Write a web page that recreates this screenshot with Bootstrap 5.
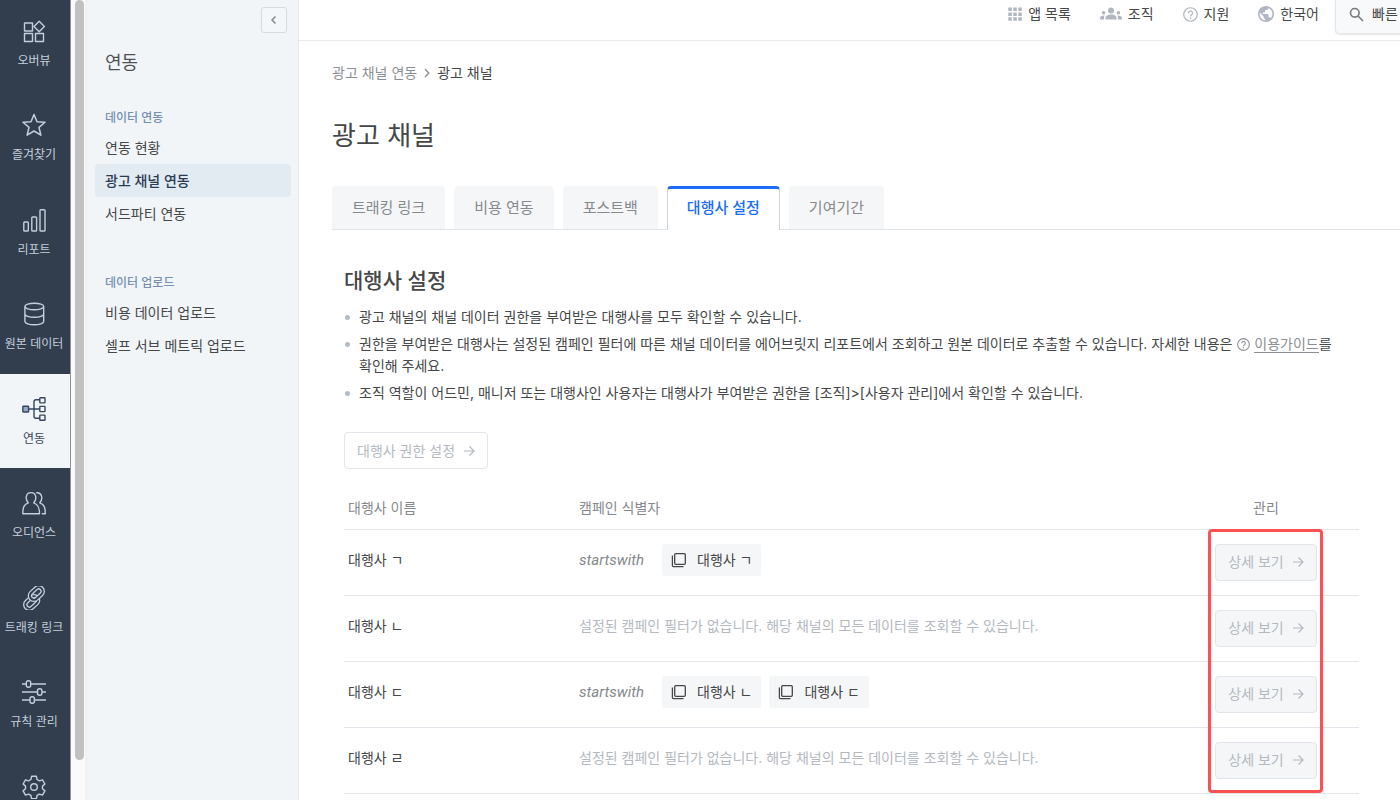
<!DOCTYPE html>
<html lang="ko">
<head>
<meta charset="utf-8">
<meta name="viewport" content="width=device-width, initial-scale=1">
<title>광고 채널</title>
<link href="https://cdn.jsdelivr.net/npm/bootstrap@5.3.0/dist/css/bootstrap.min.css" rel="stylesheet">
<style>
body{font-family:Inter,"Noto Sans CJK KR",sans-serif;font-size:14px;line-height:22px;color:#454748;background:#fff;word-break:keep-all}
a{color:inherit;text-decoration:none}
svg{display:block;fill:none;stroke:currentColor;flex:none}
.shell{height:100vh;overflow:hidden}
.rail{width:71px;background:#323e4e;border-right:1px solid #8b939d;color:#c3cedb;font-size:12px;line-height:18px}
.rail ul{margin-top:-4px}
.rail li{height:94px}
.rail li:nth-child(even){height:95px}
.rail a{height:100%;padding:23px 2px 0 0;gap:9px;white-space:nowrap}
.rail a.active{background:#f1f5f8;color:#36475c}
.track{width:16px;background:#fafafa;border-right:2px solid #f0f1f3;padding:0 2px 40px 4px}
.thumb{background:#c1c1c1;border-radius:5px;height:100%;width:9px}
.side{width:212px;background:#f1f5f8;border-right:1px solid #e4e9ee;padding:7px 7px 0 8px}
.fold{width:26px;height:26px;margin-right:4px;border:1px solid #d5dade;border-radius:3px;background:#f4f7f9;color:#85898d;padding:0}
.side-title{font-size:18px;line-height:26px;margin:17px 0 32px;padding-left:10px;font-weight:400;color:#505254}
.side-group{font-size:12px;line-height:20px;margin-bottom:3px;padding-left:10px;color:#7590b0;font-weight:500}
.side ul{margin-bottom:43px}
.side li a{display:block;line-height:33px;padding-left:10px;border-radius:4px}
.side li a.active{background:#e2eaf2;color:#2b3c52;font-weight:500}
.topbar{height:41px;border-bottom:1px solid #e9ecef}
.topbar nav{height:28px;gap:29px;margin-right:16px}
.topbar svg{color:#b0b7c0}
.topbar nav a{gap:6px}
.quick{width:65px;height:34px;overflow:hidden;white-space:nowrap;background:#f8f9fb;border:1px solid #e4e7ea;border-width:0 0 1px 1px;border-radius:0 0 0 5px;box-shadow:0 1px 2px #0000001a;padding:0 0 5px 13px;gap:8px;color:#454748}
.topbar .quick svg{color:#77797c}
.page{padding-left:33px}
.crumbs{margin-top:21px;gap:6px;color:#8b8e93}
.crumbs [aria-current]{color:#454748}
h1{font-size:26px;line-height:38px;font-weight:400;margin:33px 0 31px;color:#454748}
.tabs{gap:9px;border-bottom:1px solid #dfe4ea}
.tabs a{height:43px;padding:0 20px;font-size:15px;line-height:44px;background:#f5f6f8;color:#86898d;border-radius:4px 4px 0 0}
.tabs a.active{height:44px;margin-bottom:-1px;padding:0 19px;line-height:38px;background:#fff;color:#1a6dff;font-weight:500;border:1px solid #cdd3da;border-top:3px solid #1a6dff;border-bottom:0}
.panel{padding:36px 41px 0 12px}
h2{font-size:21px;line-height:30px;font-weight:500;margin-bottom:10px;color:#454748}
.notes{gap:5px;margin-bottom:28px}
.notes li{padding-left:15px;position:relative}
.notes li::before{content:"";position:absolute;left:1px;top:9px;width:5px;height:5px;border-radius:50%;background:#b4bcc6}
.notes svg{display:inline-block;vertical-align:-2px;color:#8b8e93;margin-left:1px}
.notes a{color:#8b8e93;border-bottom:1px solid #8b8e93}
.go{height:37px;border:1px solid #e2e5e9;border-radius:4px;background:#fff;color:#b4b9c0;padding:0 12px;gap:8px;line-height:22px;white-space:nowrap}
.go.filled{background:#f5f6f8}
.grid{table-layout:fixed;width:100%;margin-top:18px}
.grid th{height:42px;padding:0 4px;font-weight:400;color:#85888c;border-bottom:1px solid #e2e5ea}
.grid td{height:66px;padding:14px 4px;vertical-align:top;border-bottom:1px solid #e2e5ea}
.grid .name{width:231px}
.grid .act{width:186px;text-align:center}
.rowline{line-height:32px;min-height:32px}
.empty{color:#b4b9c0}
.op{color:#85888c;font-family:Roboto,sans-serif;font-size:15px;font-style:italic;margin-right:18px}
.chip{background:#f5f6f8;border-radius:3px;padding:0 9px;gap:10px;margin-right:8px}
.callout-box{position:absolute;top:42px;bottom:1px;right:36px;width:115px;border:3px solid #fa5252;border-radius:4px;pointer-events:none}
</style>
</head>
<body>
<svg class="d-none">
  <symbol id="arrow" viewBox="0 0 12 12"><path d="M1 6h10M6.500 1.500 11 6l-4.500 4.500" stroke-width="1.200"/></symbol>
  <symbol id="help" viewBox="0 0 16 16"><circle cx="8" cy="8" r="7.200" stroke-width="1.300"/><path d="M5.800 6.600a2.200 2.200 0 1 1 3.400 1.800C8.400 9 8 9.200 8 10.200M8 11.300v1.400" stroke-width="1.300"/></symbol>
  <symbol id="copy" viewBox="0 0 16 16"><rect x="3.700" y="1.700" width="10.600" height="10.600" rx="1" stroke-width="1.300"/><path d="M1.400 3.500V13.600q0 1 1 1H12.500" stroke-width="1.300"/></symbol>
</svg>
<div class="shell d-flex">
  <nav class="rail flex-shrink-0 overflow-hidden" aria-label="주 메뉴">
    <ul class="list-unstyled mb-0">
      <li><a href="#" class="d-flex flex-column align-items-center"><svg width="24" height="24" viewBox="0 0 24 24" stroke-width="1.400"><path d="M2.500 4h8v8h-8zM2.500 14.500h8v8h-8zM13.500 14.500h8v8h-8zM17.200 2.300l5.200 5.200-5.200 5.200L12 7.500z" stroke-linejoin="round"/></svg>오버뷰</a></li>
      <li><a href="#" class="d-flex flex-column align-items-center"><svg width="24" height="24" viewBox="0 0 24 24" stroke-width="1.500" stroke-linejoin="round"><path d="M12 1.500l3 7.200 8 .6-6 5.100 1.900 7.800L12 18l-6.900 4.200L7 14.400 1 9.300l8-.6z"/></svg>즐겨찾기</a></li>
      <li><a href="#" class="d-flex flex-column align-items-center"><svg width="24" height="24" viewBox="0 0 24 24" stroke-width="1.400"><rect x="1.800" y="14" width="4.500" height="9" rx=".8"/><rect x="9.800" y="9" width="4.800" height="14" rx=".8"/><rect x="18" y="1.700" width="5" height="21.300" rx=".8"/></svg>리포트</a></li>
      <li><a href="#" class="d-flex flex-column align-items-center"><svg width="24" height="24" viewBox="0 0 24 24" stroke-width="1.400"><ellipse cx="12.300" cy="4.500" rx="9.400" ry="3.300"/><path d="M2.900 4.500v15c0 1.800 4.200 3.300 9.400 3.300s9.400-1.500 9.400-3.300v-15M2.900 12c0 1.800 4.200 3.300 9.400 3.300s9.400-1.500 9.400-3.300"/></svg>원본 데이터</a></li>
      <li><a href="#" class="active d-flex flex-column align-items-center" aria-current="page"><svg width="24" height="24" viewBox="0 0 24 24" stroke-width="1.400"><path d="M7 12h11M18 2.700h-4q-2 0-2 2v14.600q0 2 2 2h4"/><rect x=".8" y="9.200" width="5.800" height="5.800" rx=".6" fill="#93a9c4"/><g fill="#f1f5f8"><rect x="17.800" y=".7" width="5.200" height="5.200" rx=".6"/><rect x="17.800" y="9.400" width="5.200" height="5.200" rx=".6"/><rect x="17.800" y="18.100" width="5.200" height="5.200" rx=".6"/></g></svg>연동</a></li>
      <li><a href="#" class="d-flex flex-column align-items-center"><svg width="24" height="24" viewBox="0 0 24 24" stroke-width="1.400" stroke-linejoin="round"><path d="M6.300 11.800C3 8.500 3.500 1.600 9 1.600s6 6.900 2.700 10.200c3.800 1.400 5.800 3.700 5.800 11H.8c0-7.300 1.700-9.600 5.500-11z"/><path d="M14.200 1.800c5.500-1 7.300 5.800 3.600 10 3.800 1.400 5.500 3.700 5.500 11h-3.500"/></svg>오디언스</a></li>
      <li><a href="#" class="d-flex flex-column align-items-center"><svg width="24" height="24" viewBox="0 0 24 24"><g transform="rotate(-43 12 12)"><rect x="0" y="9.700" width="14.500" height="8" rx="4" stroke-width="4.600"/><rect x="0" y="9.700" width="14.500" height="8" rx="4" stroke="#323e4e" stroke-width="2"/><rect x="9.500" y="6.300" width="14.500" height="8" rx="4" stroke-width="4.600"/><rect x="9.500" y="6.300" width="14.500" height="8" rx="4" stroke="#323e4e" stroke-width="2"/></g></svg>트래킹 링크</a></li>
      <li><a href="#" class="d-flex flex-column align-items-center"><svg width="24" height="24" viewBox="0 0 24 24" stroke-width="1.400"><path d="M0 4h4.300M8.700 4H24M0 12h15.500M20 12h4M0 20h8M12.500 20H24"/><rect x="4.300" y=".7" width="4.400" height="6.600" rx="2"/><rect x="15.500" y="8.700" width="4.400" height="6.600" rx="2"/><rect x="8" y="16.700" width="4.400" height="6.600" rx="2"/></svg>규칙 관리</a></li>
      <li><a href="#" class="d-flex flex-column align-items-center" aria-label="설정"><svg width="24" height="24" viewBox="0 0 24 24" stroke-width="1.400" stroke-linejoin="round"><circle cx="12" cy="12" r="3.300"/><path d="M9.600 1.300h4.800l.7 3.200 2.300 1.300 3.100-1 2.400 4.200-2.400 2.100v2.700l2.400 2.100-2.400 4.200-3.100-1-2.300 1.300-.7 3.200H9.600l-.7-3.200-2.300-1.300-3.100 1-2.400-4.200 2.400-2.100v-2.700L1.100 9l2.400-4.200 3.100 1 2.300-1.300z"/></svg></a></li>
    </ul>
  </nav>
  <div class="track flex-shrink-0"><div class="thumb"></div></div>
  <aside class="side flex-shrink-0">
    <div class="d-flex justify-content-end"><button type="button" class="fold d-flex align-items-center justify-content-center" aria-label="접기"><svg width="10" height="10" viewBox="0 0 10 10" stroke-width="1.500"><path d="M6.500 1.500 3 5l3.500 3.500"/></svg></button></div>
    <div class="side-title">연동</div>
    <div class="side-group">데이터 연동</div>
    <ul class="list-unstyled">
      <li><a href="#">연동 현황</a></li>
      <li><a href="#" class="active">광고 채널 연동</a></li>
      <li><a href="#">서드파티 연동</a></li>
    </ul>
    <div class="side-group">데이터 업로드</div>
    <ul class="list-unstyled">
      <li><a href="#">비용 데이터 업로드</a></li>
      <li><a href="#">셀프 서브 메트릭 업로드</a></li>
    </ul>
  </aside>
  <div class="flex-grow-1 overflow-hidden">
    <header class="topbar d-flex justify-content-end align-items-start">
      <nav class="d-flex align-items-center" aria-label="상단 메뉴">
        <a href="#" class="d-flex align-items-center"><svg width="14" height="14" viewBox="0 0 14 14" stroke-width="3.500" stroke-dasharray="3.500 1.500"><path d="M.3 2.300h13.500M.3 7.200h13.500M.3 12.100h13.500"/></svg>앱 목록</a>
        <a href="#" class="d-flex align-items-center"><svg width="22" height="14" viewBox="0 0 22 14" style="fill:currentColor;stroke:none"><circle cx="11" cy="3.500" r="3"/><path d="M5.500 12.500v-1.700C5.500 9 8 7.600 11 7.600s5.500 1.400 5.500 3.200v1.700z"/><circle cx="3.600" cy="5.800" r="1.800"/><circle cx="18.400" cy="5.800" r="1.800"/><path d="M0 12.500v-1.500c0-1.500 2-2.600 4.700-2.400q-.8 1-.7 3.900zM22 12.500v-1.500c0-1.500-2-2.600-4.700-2.400q.8 1 .7 3.900z"/></svg>조직</a>
        <a href="#" class="d-flex align-items-center"><svg width="15" height="15"><use href="#help"/></svg>지원</a>
        <a href="#" class="d-flex align-items-center"><svg width="16" height="16" viewBox="2 2 20 20" style="fill:currentColor;stroke:none"><path d="M12 2C6.480 2 2 6.480 2 12s4.480 10 10 10 10-4.480 10-10S17.520 2 12 2zm-1 17.930c-3.950-.49-7-3.850-7-7.930 0-.62.080-1.210.21-1.790L9 15v1c0 1.100.9 2 2 2v1.930zm6.900-2.540c-.26-.81-1-1.390-1.900-1.390h-1v-3c0-.55-.45-1-1-1H8v-2h2c.55 0 1-.45 1-1V7h2c1.100 0 2-.9 2-2v-.41c2.930 1.190 5 4.060 5 7.410 0 2.080-.8 3.970-2.100 5.390z"/></svg>한국어</a>
      </nav>
      <button type="button" class="quick d-flex align-items-center"><svg width="15" height="15" viewBox="0 0 15 15" stroke-width="1.600"><circle cx="5.800" cy="5.800" r="4.300"/><path d="M9 9l5 5"/></svg>빠른</button>
    </header>
    <main class="page">
      <nav class="crumbs d-flex align-items-center" aria-label="이동 경로"><a href="#">광고 채널 연동</a><svg width="8" height="10" viewBox="0 0 8 10" stroke-width="1.300"><path d="M2 1l3.800 4L2 9"/></svg><span aria-current="page">광고 채널</span></nav>
      <h1>광고 채널</h1>
      <nav class="tabs d-flex align-items-end" aria-label="광고 채널 탭">
        <a href="#">트래킹 링크</a><a href="#">비용 연동</a><a href="#">포스트백</a><a href="#" class="active" aria-current="page">대행사 설정</a><a href="#">기여기간</a>
      </nav>
      <section class="panel">
        <h2>대행사 설정</h2>
        <ul class="notes list-unstyled d-flex flex-column">
          <li>광고 채널의 채널 데이터 권한을 부여받은 대행사를 모두 확인할 수 있습니다.</li>
          <li>권한을 부여받은 대행사는 설정된 캠페인 필터에 따른 채널 데이터를 에어브릿지 리포트에서 조회하고 원본 데이터로 추출할 수 있습니다. 자세한 내용은 <svg width="13" height="13"><use href="#help"/></svg> <a href="#">이용가이드</a>를 확인해 주세요.</li>
          <li>조직 역할이 어드민, 매니저 또는 대행사인 사용자는 대행사가 부여받은 권한을 [조직]&gt;[사용자 관리]에서 확인할 수 있습니다.</li>
        </ul>
        <button type="button" class="go d-inline-flex align-items-center">대행사 권한 설정<svg width="12" height="12"><use href="#arrow"/></svg></button>
        <div class="position-relative">
          <table class="grid">
            <thead><tr><th class="name" scope="col">대행사 이름</th><th scope="col">캠페인 식별자</th><th class="act" scope="col">관리</th></tr></thead>
            <tbody>
              <tr><td><div class="rowline">대행사 ㄱ</div></td><td><div class="rowline d-flex"><span class="op">startswith</span><span class="chip d-flex align-items-center"><svg width="16" height="16"><use href="#copy"/></svg>대행사 ㄱ</span></div></td><td class="act"><button type="button" class="go filled d-inline-flex align-items-center">상세 보기<svg width="12" height="12"><use href="#arrow"/></svg></button></td></tr>
              <tr><td><div class="rowline">대행사 ㄴ</div></td><td><div class="rowline empty">설정된 캠페인 필터가 없습니다. 해당 채널의 모든 데이터를 조회할 수 있습니다.</div></td><td class="act"><button type="button" class="go filled d-inline-flex align-items-center">상세 보기<svg width="12" height="12"><use href="#arrow"/></svg></button></td></tr>
              <tr><td><div class="rowline">대행사 ㄷ</div></td><td><div class="rowline d-flex"><span class="op">startswith</span><span class="chip d-flex align-items-center"><svg width="16" height="16"><use href="#copy"/></svg>대행사 ㄴ</span><span class="chip d-flex align-items-center"><svg width="16" height="16"><use href="#copy"/></svg>대행사 ㄷ</span></div></td><td class="act"><button type="button" class="go filled d-inline-flex align-items-center">상세 보기<svg width="12" height="12"><use href="#arrow"/></svg></button></td></tr>
              <tr><td><div class="rowline">대행사 ㄹ</div></td><td><div class="rowline empty">설정된 캠페인 필터가 없습니다. 해당 채널의 모든 데이터를 조회할 수 있습니다.</div></td><td class="act"><button type="button" class="go filled d-inline-flex align-items-center">상세 보기<svg width="12" height="12"><use href="#arrow"/></svg></button></td></tr>
            </tbody>
          </table>
          <div class="callout-box"></div>
        </div>
      </section>
    </main>
  </div>
</div>
<script src="https://cdn.jsdelivr.net/npm/bootstrap@5.3.0/dist/js/bootstrap.bundle.min.js"></script>
</body>
</html>
